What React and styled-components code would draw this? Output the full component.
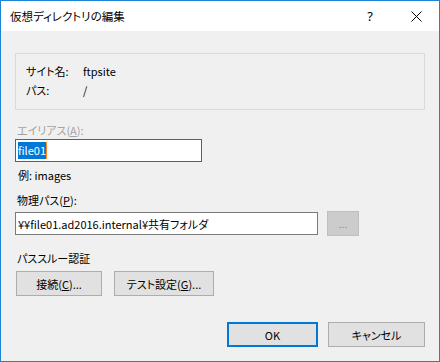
import styled, { createGlobalStyle } from 'styled-components';

const GlobalStyle = createGlobalStyle`
  html, body {
    margin: 0;
    padding: 0;
    background: #ffffff;
  }
  body {
    font-family: 'Noto Sans CJK JP', 'Noto Sans', sans-serif;
    font-size: 11px;
    font-feature-settings: 'palt';
    color: #000000;
  }
`;

const Window = styled.div`
  width: 440px;
  height: 362px;
  box-sizing: border-box;
  border: 1px solid #1c84d6;
  background: #f0f0f0;
  display: flex;
  flex-direction: column;
`;

const TitleBar = styled.div`
  height: 30px;
  background: #ffffff;
  display: flex;
  align-items: center;
  padding-left: 9px;
  .title {
    flex: 1;
    font-size: 11.5px;
    line-height: 16px;
  }
`;

const CaptionButton = styled.div`
  width: ${(p) => p.$width}px;
  height: 30px;
  display: flex;
  align-items: center;
  justify-content: center;
  font-size: 13px;
  line-height: 16px;
  font-family: 'Noto Sans', sans-serif;
`;

const Body = styled.div`
  flex: 1;
  padding: 0 14px;
  display: flex;
  flex-direction: column;
  align-items: flex-start;
`;

const InfoBox = styled.div`
  align-self: stretch;
  margin-top: 22px;
  height: 57px;
  box-sizing: border-box;
  border: 1px solid #dadada;
  padding: 8px 10px 0 10px;
  display: grid;
  grid-template-columns: 57px 1fr;
  grid-auto-rows: 19px;
  line-height: 19px;
`;

const Label = styled.div`
  line-height: 16px;
  margin-top: ${(p) => p.$top}px;
  margin-left: ${(p) => p.$left || 2}px;
  color: ${(p) => (p.$disabled ? '#a3a3a3' : '#000000')};
`;

const TextBox = styled.div`
  margin-top: ${(p) => p.$top}px;
  width: ${(p) => p.$width}px;
  height: 23px;
  box-sizing: border-box;
  border: 1px solid ${(p) => (p.$focused ? '#0078d7' : '#7a7a7a')};
  background: #ffffff;
  display: flex;
  align-items: center;
  padding-left: 2px;
  white-space: nowrap;
  overflow: hidden;
`;

const Selection = styled.span`
  background: #0078d7;
  color: #ffffff;
  line-height: 17px;
  border-right: 1px solid #ff8a1f;
`;

const PathRow = styled.div`
  margin-top: 3px;
  display: flex;
  align-items: flex-start;
  gap: 9px;
`;

const Button = styled.div`
  width: ${(p) => p.$width}px;
  height: 25px;
  box-sizing: border-box;
  margin-top: ${(p) => p.$top || 0}px;
  border: ${(p) => (p.$default ? '2px solid #0078d7' : '1px solid #adadad')};
  background: #e1e1e1;
  display: flex;
  align-items: center;
  justify-content: center;
  line-height: 16px;
  color: #000000;
`;

const BrowseButton = styled(Button)`
  background: #cccccc;
  border-color: #bfbfbf;
  color: #8c8c8c;
  font-size: 10px;
`;

const ButtonRow = styled.div`
  margin-top: ${(p) => p.$top}px;
  margin-left: ${(p) => p.$left || 0}px;
  align-self: ${(p) => (p.$end ? 'flex-end' : 'flex-start')};
  display: flex;
  gap: ${(p) => p.$gap}px;
`;

function CloseIcon() {
  return (
    <svg width="11" height="11" viewBox="0 0 11 11">
      <path d="M0.5 0.5 L10.5 10.5 M10.5 0.5 L0.5 10.5" stroke="#000" strokeWidth="1" />
    </svg>
  );
}

export default function App() {
  return (
    <>
      <GlobalStyle />
      <Window>
        <TitleBar>
          <div className="title">仮想ディレクトリの編集</div>
          <CaptionButton $width={46}>?</CaptionButton>
          <CaptionButton $width={46}>
            <CloseIcon />
          </CaptionButton>
        </TitleBar>
        <Body>
          <InfoBox>
            <div>サイト名:</div>
            <div>ftpsite</div>
            <div>パス:</div>
            <div>/</div>
          </InfoBox>
          <Label $top={12} $disabled>
            エイリアス(<u>A</u>):
          </Label>
          <TextBox $top={1} $width={187} $focused>
            <Selection>file01</Selection>
          </TextBox>
          <Label $top={5} $left={3}>
            例: images
          </Label>
          <Label $top={9}>
            物理パス(<u>P</u>):
          </Label>
          <PathRow>
            <TextBox $top={1} $width={303}>
              ¥¥file01.ad2016.internal¥共有フォルダ
            </TextBox>
            <BrowseButton $width={32}>...</BrowseButton>
          </PathRow>
          <Label $top={14}>パススルー認証</Label>
          <ButtonRow $top={5} $left={1} $gap={12}>
            <Button $width={86}>
              接続(<u>C</u>)...
            </Button>
            <Button $width={100}>
              テスト設定(<u>G</u>)...
            </Button>
          </ButtonRow>
          <ButtonRow $top={26} $gap={10} $end>
            <Button $width={91} $default>
              OK
            </Button>
            <Button $width={97}>キャンセル</Button>
          </ButtonRow>
        </Body>
      </Window>
    </>
  );
}
